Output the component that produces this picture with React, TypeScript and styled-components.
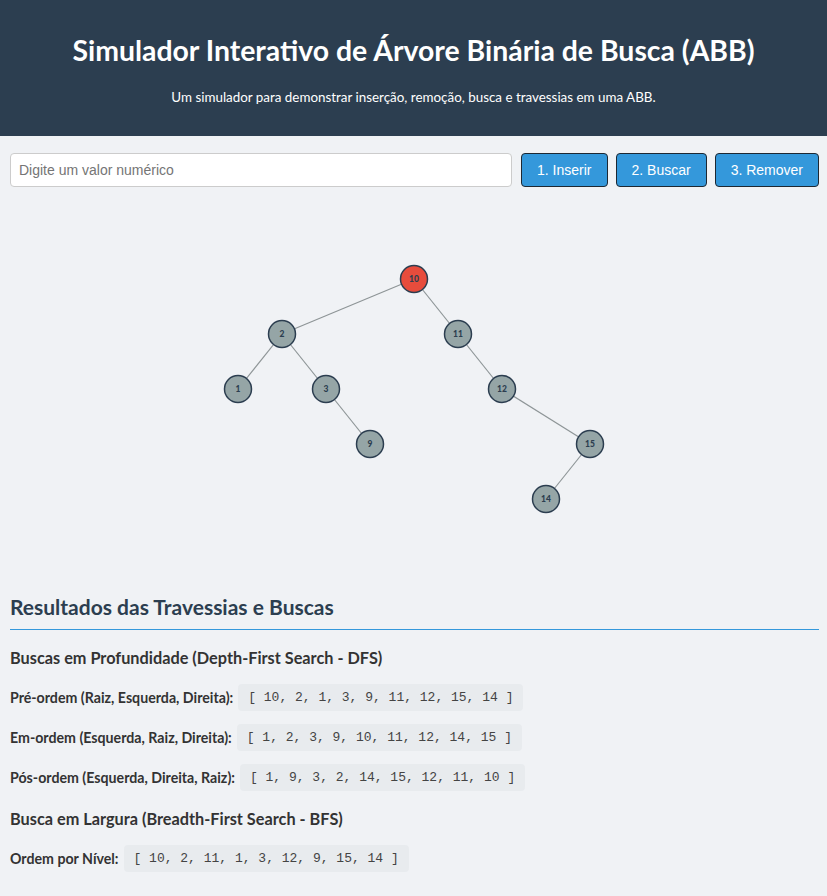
import React from "react";
import styled, { createGlobalStyle } from "styled-components";

const GlobalStyle = createGlobalStyle`
  html, body { margin: 0; padding: 0; background: #f0f2f5; }
  body { font-family: Lato, "Open Sans", sans-serif; color: #333; }
`;

const Header = styled.header`
  background: #2c3e50;
  color: #fff;
  height: 136px;
  display: flex;
  flex-direction: column;
  align-items: center;
  justify-content: flex-start;
  padding-top: 31px;
  box-sizing: border-box;
`;

const Title = styled.h1`
  margin: 0;
  font-size: 28.4px;
  font-weight: 700;
  line-height: 38px;
`;

const Subtitle = styled.p`
  margin: 19px 0 0;
  font-size: 13.4px;
  line-height: 18px;
`;

const Main = styled.main`
  padding: 17px 8px 20px 10px;
`;

const Controls = styled.div`
  display: flex;
  gap: 8px;
  height: 34px;
`;

const Input = styled.input`
  flex: 1;
  margin-right: 1px;
  border: 1px solid #ccc;
  border-radius: 4px;
  padding: 0 8px;
  font-family: "Liberation Sans", Arial, sans-serif;
  font-size: 14px;
  background: #fff;
  &::placeholder { color: #757575; }
`;

const Button = styled.button`
  background: #3498db;
  color: #fff;
  border: 1px solid #1d2833;
  border-radius: 4px;
  padding: 0 15px;
  font-family: "Liberation Sans", Arial, sans-serif;
  font-size: 14px;
  cursor: pointer;
`;

const TreeSvg = styled.svg`
  display: block;
  width: 100%;
  height: 386px;
  margin-top: 20px;
`;

const Results = styled.section`
  display: flex;
  flex-direction: column;
`;

const SectionTitle = styled.h2`
  margin: 0;
  font-size: 21px;
  font-weight: 700;
  line-height: 28px;
  color: #2c3e50;
  padding-bottom: 8px;
  border-bottom: 1px solid #3498db;
`;

const SubTitle = styled.h3`
  margin: 17px 0 15px;
  font-size: 16.3px;
  font-weight: 700;
  line-height: 22px;
  color: #333;
`;

const Row = styled.div`
  display: flex;
  align-items: center;
  gap: 5px;
  margin-bottom: 13px;
  &:last-of-type { margin-bottom: 0; }
`;

const Label = styled.strong`
  font-size: 14.2px;
  font-weight: 700;
  color: #333;
`;

const Code = styled.code`
  display: inline-block;
  background: #e8ebee;
  border-radius: 4px;
  padding: 6px 10px;
  line-height: 15px;
  font-family: "Liberation Mono", "Courier New", monospace;
  font-size: 13px;
  color: #444;
  white-space: pre;
`;

const Group = styled.div`
  display: flex;
  flex-direction: column;
`;

type N = { v: number; depth: number; parent?: number };
const nodes: N[] = [
  { v: 10, depth: 0 },
  { v: 2, depth: 1, parent: 10 },
  { v: 11, depth: 1, parent: 10 },
  { v: 1, depth: 2, parent: 2 },
  { v: 3, depth: 2, parent: 2 },
  { v: 12, depth: 2, parent: 11 },
  { v: 9, depth: 3, parent: 3 },
  { v: 15, depth: 3, parent: 12 },
  { v: 14, depth: 4, parent: 15 },
];
const inorder = [1, 2, 3, 9, 10, 11, 12, 14, 15];
const pos = (v: number) => {
  const n = nodes.find((x) => x.v === v)!;
  return { x: 228 + 44 * inorder.indexOf(v), y: 72 + 55 * n.depth };
};

function Tree() {
  return (
    <TreeSvg viewBox="0 0 809 386">
      {nodes
        .filter((n) => n.parent !== undefined)
        .map((n) => {
          const a = pos(n.parent!);
          const b = pos(n.v);
          return (
            <line key={"l" + n.v} x1={a.x} y1={a.y} x2={b.x} y2={b.y} stroke="#8e9597" strokeWidth={1.2} />
          );
        })}
      {nodes.map((n) => {
        const p = pos(n.v);
        return (
          <g key={n.v}>
            <circle cx={p.x} cy={p.y} r={13.5} fill={n.depth === 0 ? "#e74c3c" : "#95a5a6"} stroke="#2c3e50" strokeWidth={1.5} />
            <text
              x={p.x}
              y={p.y + 3}
              textAnchor="middle"
              fontFamily="Lato, sans-serif"
              fontSize={8.5}
              fontWeight={900}
              fill="#2c3e50"
            >
              {n.v}
            </text>
          </g>
        );
      })}
    </TreeSvg>
  );
}

export default function App() {
  return (
    <>
      <GlobalStyle />
      <Header>
        <Title>Simulador Interativo de Árvore Binária de Busca (ABB)</Title>
        <Subtitle>Um simulador para demonstrar inserção, remoção, busca e travessias em uma ABB.</Subtitle>
      </Header>
      <Main>
        <Controls>
          <Input type="text" placeholder="Digite um valor numérico" />
          <Button>1. Inserir</Button>
          <Button>2. Buscar</Button>
          <Button>3. Remover</Button>
        </Controls>
        <Tree />
        <Results>
          <SectionTitle>Resultados das Travessias e Buscas</SectionTitle>
          <SubTitle>Buscas em Profundidade (Depth-First Search - DFS)</SubTitle>
          <Group>
            <Row>
              <Label>Pré-ordem (Raiz, Esquerda, Direita):</Label>
              <Code>[ 10, 2, 1, 3, 9, 11, 12, 15, 14 ]</Code>
            </Row>
            <Row>
              <Label>Em-ordem (Esquerda, Raiz, Direita):</Label>
              <Code>[ 1, 2, 3, 9, 10, 11, 12, 14, 15 ]</Code>
            </Row>
            <Row>
              <Label>Pós-ordem (Esquerda, Direita, Raiz):</Label>
              <Code>[ 1, 9, 3, 2, 14, 15, 12, 11, 10 ]</Code>
            </Row>
          </Group>
          <SubTitle>Busca em Largura (Breadth-First Search - BFS)</SubTitle>
          <Group>
            <Row>
              <Label>Ordem por Nível:</Label>
              <Code>[ 10, 2, 11, 1, 3, 12, 9, 15, 14 ]</Code>
            </Row>
          </Group>
        </Results>
      </Main>
    </>
  );
}
